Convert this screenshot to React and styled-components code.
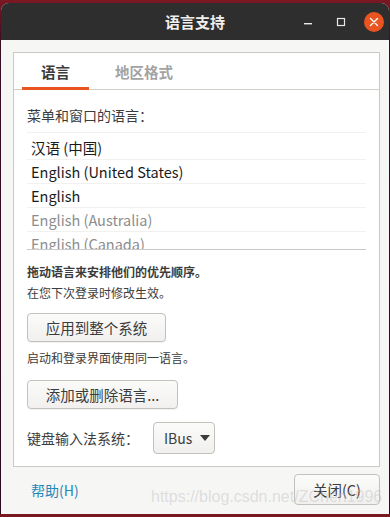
import styled, { createGlobalStyle } from "styled-components";

const GlobalStyle = createGlobalStyle`
  html, body {
    margin: 0;
    padding: 0;
    background: linear-gradient(180deg, #7b1822 0px, #3d0d22 40px, #2c0a1f 100%);
    font-family: "Noto Sans CJK SC", "Noto Sans", sans-serif;
  }
  * { box-sizing: border-box; }
`;

const languages = [
  { name: "汉语 (中国)", active: true },
  { name: "English (United States)", active: true },
  { name: "English", active: true },
  { name: "English (Australia)", active: false },
  { name: "English (Canada)", active: false },
];

export default function App() {
  return (
    <>
      <GlobalStyle />
      <Window>
        <TitleBar>
          <span />
          <Title>语言支持</Title>
          <Controls>
            <ControlButton aria-label="minimize">
              <svg width="10" height="10" viewBox="0 0 10 10">
                <rect x="1" y="6" width="8" height="1.4" fill="#e8e8e7" />
              </svg>
            </ControlButton>
            <ControlButton aria-label="maximize">
              <svg width="10" height="10" viewBox="0 0 10 10">
                <rect x="1.5" y="1.5" width="7" height="7" fill="none" stroke="#e8e8e7" strokeWidth="1.2" />
              </svg>
            </ControlButton>
            <CloseButton aria-label="close">
              <svg width="10" height="10" viewBox="0 0 10 10">
                <path d="M1.5 1.5 L8.5 8.5 M8.5 1.5 L1.5 8.5" stroke="#fff" strokeWidth="1.4" strokeLinecap="round" />
              </svg>
            </CloseButton>
          </Controls>
        </TitleBar>
        <Body>
          <Notebook>
            <TabBar>
              <Tab $active>语言</Tab>
              <Tab>地区格式</Tab>
            </TabBar>
            <Panel>
              <Label>菜单和窗口的语言：</Label>
              <LangList>
                {languages.map((l) => (
                  <LangRow key={l.name} $active={l.active}>
                    {l.name}
                  </LangRow>
                ))}
              </LangList>
              <Hint $bold>拖动语言来安排他们的优先顺序。</Hint>
              <Hint $gap={5}>在您下次登录时修改生效。</Hint>
              <Button $top={12} $width={139}>应用到整个系统</Button>
              <Hint $gap={8}>启动和登录界面使用同一语言。</Hint>
              <Button $top={14} $width={151}>添加或删除语言...</Button>
              <InputRow>
                <Label>键盘输入法系统：</Label>
                <Combo>
                  IBus
                  <svg width="10" height="6" viewBox="0 0 10 6">
                    <path d="M0 0 L10 0 L5 6 Z" fill="#3c3c3c" />
                  </svg>
                </Combo>
              </InputRow>
            </Panel>
          </Notebook>
          <Footer>
            <HelpLink>帮助(H)</HelpLink>
            <FooterButton>关闭(C)</FooterButton>
          </Footer>
        </Body>
        <Watermark>https://blog.csdn.net/ZChen1996</Watermark>
      </Window>
    </>
  );
}

const Window = styled.div`
  position: relative;
  margin: 3px 1px 0;
  width: 388px;
  height: 511px;
  border-radius: 8px 8px 0 0;
  overflow: hidden;
  display: flex;
  flex-direction: column;
  background: #f6f6f5;
`;

const TitleBar = styled.div`
  height: 37px;
  flex-shrink: 0;
  background: #2e2e2e;
  display: grid;
  grid-template-columns: 1fr auto 1fr;
  align-items: center;
`;

const Title = styled.div`
  color: #f0efed;
  font-size: 15px;
  font-weight: 700;
`;

const Controls = styled.div`
  display: flex;
  justify-content: flex-end;
  align-items: center;
  gap: 13px;
  padding-right: 5px;
`;

const ControlButton = styled.div`
  width: 20px;
  height: 20px;
  display: flex;
  align-items: center;
  justify-content: center;
`;

const CloseButton = styled(ControlButton)`
  border-radius: 50%;
  background: #e95420;
`;

const Body = styled.div`
  flex: 1;
  display: flex;
  flex-direction: column;
  padding: 12px 9px 0 12px;
`;

const Notebook = styled.div`
  height: 415px;
  border: 1px solid #cdc8c3;
  background: #ffffff;
  display: flex;
  flex-direction: column;
`;

const TabBar = styled.div`
  height: 37px;
  display: flex;
  gap: 7px;
  padding-left: 8px;
  border-bottom: 1px solid #d3cfcb;
`;

const Tab = styled.div`
  padding: 0 19px;
  display: flex;
  align-items: center;
  font-size: 14.5px;
  font-weight: 700;
  color: ${(p) => (p.$active ? "#3c3c3c" : "#a3a3a3")};
  border-bottom: 3px solid ${(p) => (p.$active ? "#e95420" : "transparent")};
  margin-bottom: -1px;
  padding-top: 3px;
`;

const Panel = styled.div`
  flex: 1;
  padding: 15px 13px 12px;
  display: flex;
  flex-direction: column;
  align-items: flex-start;
`;

const Label = styled.div`
  font-size: 14px;
  line-height: 20px;
  color: #3c3c3c;
`;

const LangList = styled.div`
  align-self: stretch;
  margin: 7px 0 0;
  height: 118px;
  overflow: hidden;
  border-top: 1px solid #f1f1f0;
  border-bottom: 1px solid #c9c9c9;
  padding-top: 3px;
`;

const LangRow = styled.div`
  height: 24px;
  line-height: 23px;
  padding-left: 4px;
  font-size: 14.5px;
  color: ${(p) => (p.$active ? "#1a1a1a" : "#8c8c8c")};
  border-bottom: 1px solid #f1f1f0;
`;

const Hint = styled.div`
  margin-top: ${(p) => p.$gap ?? 14}px;
  font-size: 12px;
  line-height: 16px;
  color: #3c3c3c;
  font-weight: ${(p) => (p.$bold ? 700 : 400)};
`;

const Button = styled.div`
  margin-top: ${(p) => p.$top}px;
  width: ${(p) => p.$width}px;
  height: 29px;
  display: flex;
  align-items: center;
  justify-content: center;
  border: 1px solid #c4c0bb;
  border-radius: 4px;
  background: linear-gradient(180deg, #fbfbfa, #f1f0ef);
  box-shadow: 0 1px 1px rgba(0, 0, 0, 0.06);
  font-size: 14.5px;
  color: #3c3c3c;
`;

const InputRow = styled.div`
  margin-top: 13px;
  display: flex;
  align-items: center;
  gap: 14px;
`;

const Combo = styled.div`
  width: 62px;
  height: 32px;
  display: flex;
  align-items: center;
  gap: 8px;
  padding-left: 10px;
  border: 1px solid #c4c0bb;
  border-radius: 4px;
  background: linear-gradient(180deg, #fbfbfa, #f1f0ef);
  font-size: 14px;
  color: #3c3c3c;
`;

const Footer = styled.div`
  display: flex;
  justify-content: space-between;
  align-items: center;
  padding: 7px 0 0 18px;
`;

const HelpLink = styled.div`
  font-size: 14px;
  color: #1f88b8;
`;

const FooterButton = styled.div`
  width: 86px;
  height: 31px;
  display: flex;
  align-items: center;
  justify-content: center;
  border: 1px solid #c4c0bb;
  border-radius: 4px;
  background: linear-gradient(180deg, #fbfbfa, #f1f0ef);
  font-size: 14.5px;
  color: #3c3c3c;
`;

const Watermark = styled.div`
  position: absolute;
  left: 150px;
  top: 485px;
  font-family: "Liberation Sans", sans-serif;
  font-size: 16px;
  color: rgba(190, 190, 190, 0.45);
  pointer-events: none;
  white-space: nowrap;
`;
